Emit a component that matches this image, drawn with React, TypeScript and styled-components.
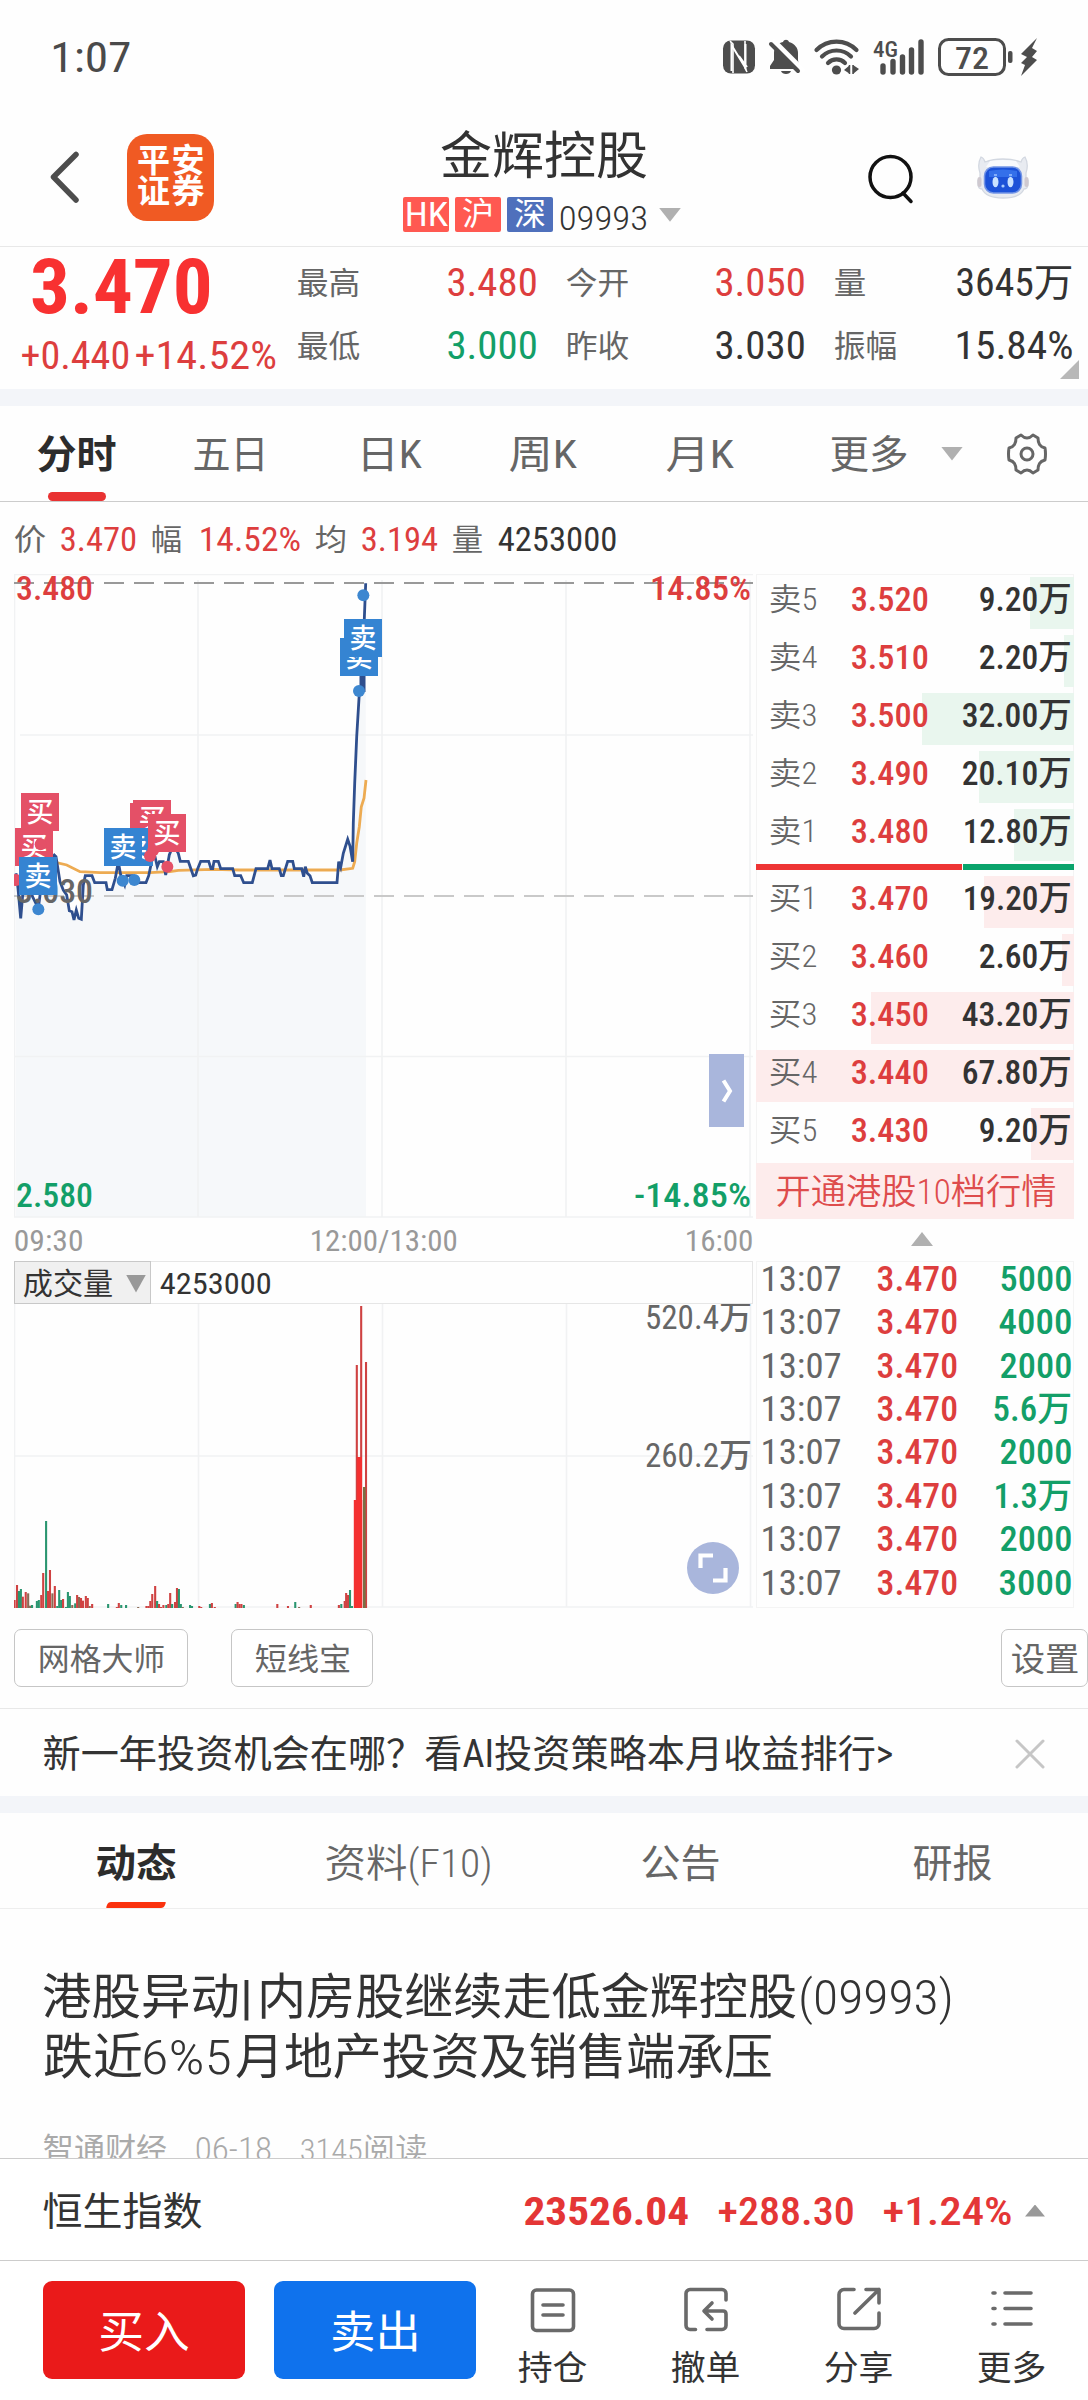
import React, { useLayoutEffect, useRef, useState } from 'react';
import styled, { createGlobalStyle } from 'styled-components';

const RED = '#dd3e3e';
const GREEN = '#139f68';
const INK = '#333';
const GREY = '#666';
const FONT = 'Roboto, "Noto Sans CJK SC", sans-serif';

const Global = createGlobalStyle`
  * { box-sizing: border-box; }
  body { margin: 0; background: #fff; }
`;

const Page = styled.div`
  width: 1088px;
  height: 2400px;
  overflow: hidden;
  display: flex;
  flex-direction: column;
  background: #fefefe;
  color: ${INK};
  font-family: ${FONT};
  font-stretch: 75%;
`;

/* Text condensed or widened to an exact measure */
const FitBox = styled.span<{ $w: number; $ml: number; $size: number; $weight: number; $color?: string }>`
  display: block;
  flex: none;
  width: ${p => p.$w}px;
  margin-left: ${p => p.$ml}px;
  font-size: ${p => p.$size}px;
  font-weight: ${p => p.$weight};
  line-height: 1.2;
  white-space: nowrap;
  color: ${p => p.$color || 'inherit'};
`;
const FitInk = styled.span`
  display: inline-block;
  transform-origin: 0 50%;
`;

type FitProps = { w: number; ml?: number; size: number; weight?: number; color?: string; children: React.ReactNode };
function Fit({ w, ml = 0, size, weight = 385, color, children }: FitProps) {
  const ref = useRef<HTMLSpanElement>(null);
  const [scale, setScale] = useState(1);
  useLayoutEffect(() => {
    if (ref.current) setScale((w + size * 0.08) / ref.current.offsetWidth);
  }, [w, size, children]);
  return (
    <FitBox $w={w} $ml={ml} $size={size} $weight={weight} $color={color}>
      <FitInk ref={ref} style={{ transform: `translateX(${-size * 0.04}px) scaleX(${scale})` }}>{children}</FitInk>
    </FitBox>
  );
}

const Triangle = styled.i<{ $up?: boolean; $w: number; $h: number; $ml?: number; $color?: string }>`
  display: block;
  flex: none;
  width: ${p => p.$w}px;
  height: ${p => p.$h}px;
  margin-left: ${p => p.$ml || 0}px;
  background: ${p => p.$color || '#b0b0b0'};
  clip-path: ${p => (p.$up ? 'polygon(50% 0, 100% 100%, 0 100%)' : 'polygon(0 0, 100% 0, 50% 100%)')};
`;

const StatusBar = styled.div`
  height: 114px;
  flex: none;
  display: flex;
  align-items: center;
  justify-content: space-between;
  padding: 1px 0 0 52px;
  color: #4a4a4a;
`;

const Header = styled.header`
  height: 133px;
  flex: none;
  display: grid;
  grid-template-columns: 403px 279px 1fr;
  border-bottom: 1px solid #e8e8e8;
`;
const HeaderLeft = styled.div`
  display: flex;
  align-items: flex-start;
  padding: 20px 0 0 48px;
`;
const Logo = styled.div`
  width: 87px;
  height: 87px;
  margin-left: 48px;
  border-radius: 20px;
  background: #f05a23;
  color: #fff;
  display: flex;
  flex-direction: column;
  align-items: center;
  justify-content: center;
  font-size: 33px;
  line-height: 31px;
  font-weight: 600;
  letter-spacing: 1.5px;
  padding: 0 0 4px 2px;
`;
const HeaderTitle = styled.div`
  display: flex;
  flex-direction: column;
  padding-top: 12px;
`;
const CodeRow = styled.div`
  display: flex;
  align-items: center;
  gap: 6px;
  margin-top: 10px;
  height: 35px;
`;
const Code = styled.div`
  padding: 7px 0 0 1px;
`;
const Badge = styled.span<{ $bg: string }>`
  width: 46px;
  height: 35px;
  border-radius: 2px;
  background: ${p => p.$bg};
  color: #fff;
  display: flex;
  align-items: center;
  justify-content: center;
  font-size: 32px;
  line-height: 35px;
`;
const HeaderRight = styled.div`
  display: flex;
  align-items: flex-start;
  gap: 59px;
  padding: 39px 0 0 185px;
`;
const RobotSlot = styled.div`
  padding-top: 3px;
`;

const Quote = styled.section`
  height: 142px;
  flex: none;
  display: grid;
  grid-template-columns: 298px 1fr;
  position: relative;
`;
const QuoteMain = styled.div`
  display: flex;
  flex-direction: column;
  margin-top: -5px;
`;
const ChangeRow = styled.div`
  display: flex;
`;
const Stats = styled.div`
  display: grid;
  grid-template-rows: 63px 63px;
  padding-top: 5px;
`;
const StatRow = styled.div`
  display: flex;
  align-items: center;
`;
const Corner = styled.i`
  position: absolute;
  right: 9px;
  bottom: 10px;
  width: 19px;
  height: 19px;
  background: #b8b8b8;
  clip-path: polygon(100% 0, 100% 100%, 0 100%);
`;

const Band = styled.div`
  height: 17px;
  flex: none;
  background: #f3f5f9;
`;

const ChartTabs = styled.nav`
  height: 96px;
  flex: none;
  display: flex;
  align-items: stretch;
  border-bottom: 1px solid #ccc;
  color: ${GREY};
`;
const ChartTab = styled.div<{ $ml: number; $active?: boolean }>`
  margin-left: ${p => p.$ml}px;
  display: flex;
  flex-direction: column;
  align-items: center;
  padding-top: 26px;
  color: ${p => (p.$active ? '#2c2c2c' : GREY)};
`;
const Underline = styled.i`
  width: 58px;
  height: 9px;
  margin-top: auto;
  border-radius: 5px;
  background: #e93232;
`;
const TabIcon = styled.div<{ $ml: number }>`
  display: flex;
  align-items: center;
  margin-left: ${p => p.$ml}px;
`;

const InfoRow = styled.div`
  height: 72px;
  flex: none;
  display: flex;
  align-items: center;
  padding: 4px 0 0 15px;
  color: ${GREY};
`;

const Market = styled.section`
  height: 1034px;
  flex: none;
  display: grid;
  grid-template-columns: 742px 318px;
  padding-left: 14px;
`;
const ChartColumn = styled.div`
  display: flex;
  flex-direction: column;
  svg { display: block; }
`;
const TimeAxis = styled.div`
  height: 43px;
  width: 739px;
  display: flex;
  align-items: center;
  justify-content: space-between;
  color: #999;
  padding: 3px 1px 0 1px;
`;
const VolumeHead = styled.div`
  height: 43px;
  width: 739px;
  display: flex;
  align-items: center;
  border: 1px solid #e6e6e6;
`;
const VolumePick = styled.button`
  width: 137px;
  height: 43px;
  margin: -1px;
  padding: 2px 0 0 9px;
  display: flex;
  align-items: center;
  text-align: left;
  border: 1px solid #c8c8c8;
  background: #f0f0f0;
  color: ${INK};
  font: inherit;
`;
const VolumeValue = styled.div`
  padding: 3px 0 0 11px;
`;

const SideColumn = styled.div`
  display: flex;
  flex-direction: column;
`;
const Book = styled.div`
  border: 1px solid #f4f4f4;
  height: 644px;
  padding-top: 2px;
  display: flex;
  flex-direction: column;
`;
const BookRow = styled.div`
  height: 52px;
  margin: 0 -1px 6px;
  display: grid;
  flex: none;
`;
const DepthBar = styled.i<{ $side: string }>`
  grid-area: 1 / 1;
  justify-self: end;
  background: ${p => (p.$side === '卖' ? '#e9f6ee' : '#fdecec')};
`;
const BookCells = styled.div`
  grid-area: 1 / 1;
  display: grid;
  grid-template-columns: 82px 1fr auto;
  align-items: center;
  padding: 0 4px 7px 14px;
  color: ${INK};
`;
const Ratio = styled.div`
  height: 6px;
  flex: none;
  margin: -3px -1px 6px;
  display: grid;
  grid-template-columns: 206px 111px;
  gap: 1px;
  i:first-child { background: #ee3434; }
  i:last-child { background: #0aa36b; }
`;
const OpenDepth = styled.div`
  flex: none;
  height: 56px;
  margin: -3px -1px 0;
  padding: 4px 0 0 21px;
  display: flex;
  align-items: center;
  background: #fdecec;
`;
const Collapse = styled.div`
  height: 43px;
  padding-top: 14px;
`;
const Ticks = styled.div`
  height: 347px;
  border: 1px solid #f4f4f4;
  display: flex;
  flex-direction: column;
`;
const Tick = styled.div`
  height: 43.43px;
  flex: none;
  display: grid;
  grid-template-columns: 116px 1fr auto;
  align-items: center;
  padding: 0 2px 0 5px;
  &:first-child { margin-top: -4px; }
`;

const Tools = styled.div`
  height: 101px;
  flex: none;
  display: flex;
  align-items: center;
  padding: 0 0 1px 14px;
  border-bottom: 1px solid #e8e8e8;
`;
const ToolButton = styled.button<{ $w: number; $ml?: string }>`
  width: ${p => p.$w}px;
  height: 58px;
  margin-left: ${p => p.$ml || 0};
  padding: 4px 0 0;
  display: flex;
  justify-content: center;
  align-items: center;
  border: 1px solid #c6c6c6;
  border-radius: 7px;
  background: #fff;
  color: ${GREY};
  font: inherit;
`;

const Promo = styled.div`
  height: 87px;
  flex: none;
  display: flex;
  align-items: center;
  justify-content: space-between;
  padding: 4px 43px 0 44px;
  svg { margin-bottom: 2px; }
`;

const NewsTabs = styled.nav`
  height: 96px;
  flex: none;
  display: grid;
  grid-template-columns: repeat(4, 1fr);
  border-bottom: 1px solid #eee;
`;
const NewsTab = styled.div<{ $active?: boolean }>`
  display: flex;
  flex-direction: column;
  align-items: center;
  padding-top: 28px;
  color: ${p => (p.$active ? '#2c2c2c' : GREY)};
`;
const SlantLine = styled.i`
  width: 58px;
  height: 6px;
  margin-top: auto;
  border-radius: 3px 1px;
  transform: skewX(-20deg);
  background: #fa320e;
`;

const Article = styled.article`
  height: 249px;
  flex: none;
  overflow: hidden;
  padding: 59px 0 0 44px;
`;
const Headline = styled.h2`
  margin: 0;
  font-weight: 350;
  height: 60px;
  display: flex;
  align-items: center;
`;
const Meta = styled.div`
  margin-top: 42px;
  height: 40px;
  display: flex;
  align-items: center;
  color: #aaa;
`;

const IndexBar = styled.div`
  height: 102px;
  flex: none;
  display: flex;
  align-items: center;
  padding: 6px 0 0 44px;
  border-top: 1px solid #ccc;
  background: #fff;
  i { margin-bottom: 4px; }
`;
const Actions = styled.footer`
  height: 140px;
  flex: none;
  display: flex;
  border-top: 1px solid #ccc;
  padding: 20px 0 0 43px;
  background: #fff;
`;
const TradeButton = styled.button<{ $bg: string; $ml?: number }>`
  width: 202px;
  height: 98px;
  margin-left: ${p => p.$ml || 0}px;
  padding: 7px 0 0;
  display: flex;
  align-items: center;
  justify-content: center;
  border: 0;
  border-radius: 9px;
  background: ${p => p.$bg};
  color: #fff;
  font: inherit;
`;
const ActionGrid = styled.div`
  display: grid;
  grid-template-columns: repeat(4, 153px);
`;
const Action = styled.div`
  display: flex;
  flex-direction: column;
  align-items: center;
  padding-top: 6px;
  gap: 15px;
`;

const StatusIcons = () => (
  <svg width="388" height="60" viewBox="699 27 388 60" fill="#4d4d4d">
    <rect x="722" y="39.5" width="32" height="33" rx="8" />
    <path d="M730.5 70V44l14 23V43M738 55l8 11" fill="none" stroke="#fff" strokeWidth="2" />
    <path d="M729 40l3 3v29M746 71l-2-4V40" fill="none" stroke="#fff" strokeWidth="1.6" />
    <path d="M769 68v-3l4-6V52c0-6 4-10 9-11 1-3 5-3 6 0 6 2 9 6 9 11v7l1 6 2 3z" />
    <path d="M780 70h10c-1 4-9 4-10 0z" />
    <path d="M772 39l31 31" stroke="#fff" strokeWidth="5" />
    <path d="M770 43l27 27" stroke="#4d4d4d" strokeWidth="4" strokeLinecap="round" />
    <g fill="none" stroke="#4d4d4d" strokeWidth="4.200" strokeLinecap="round">
      <path d="M815.500 49a28 28 0 0 1 40 0M821 55.500a20.500 20.500 0 0 1 29 0M827 62a12 12 0 0 1 17 0" />
      <path d="M882 65v6M892 60.500v10.500M901.500 56v15M910.500 49v22M920 41v30" strokeWidth="5.400" />
    </g>
    <circle cx="835.500" cy="69" r="4.600" />
    <path d="M843 69l6-5v9zM852 64l6 4-6 5z" />
    <path d="M848.500 64v9M852 64v9" stroke="#4d4d4d" strokeWidth="1.500" />
    <text x="872" y="55.500" fontFamily="Roboto" fontSize="22" fontWeight="500" textLength="25" lengthAdjust="spacingAndGlyphs">4G</text>
    <rect x="938.500" y="38.500" width="65" height="35" rx="9" fill="none" stroke="#4d4d4d" strokeWidth="3" />
    <rect x="1007" y="50" width="4.500" height="12" rx="2" />
    <text x="954" y="67.500" fontFamily="Roboto" fontSize="32" fontWeight="500" textLength="34" lengthAdjust="spacingAndGlyphs">72</text>
    <path d="M1036 37l-16 16 6 3-6 6 4 2-4 11 16-16-5-3 5-6-5-3z" />
  </svg>
);

const Robot = () => (
  <svg width="54" height="44" viewBox="0 0 54 44">
    <path d="M5 1q3 1 4 5 8-3 18-3t18 3q1-4 4-5 4 7 1 16v5q3 2 2 6 0 5-4 5-4 9-21 9T6 33q-4 0-4-5-1-4 2-6v-5Q1 8 5 1z" fill="#e8ebf1" stroke="#d3d8e1" strokeWidth="1.300" />
    <path d="M14 5q13-2 26 0l4 6H10z" fill="#f8f9fc" />
    <rect x="1.500" y="21" width="4" height="10" rx="2" fill="#cfc9d0" />
    <rect x="48.500" y="21" width="4" height="10" rx="2" fill="#cfc9d0" />
    <rect x="8.500" y="11" width="37" height="26" rx="9" fill="#1c52d8" stroke="#7395e6" strokeWidth="1.500" />
    <path d="M13 15q14-3 28 0v6H13z" fill="#3470ea" />
    <ellipse cx="19.500" cy="26" rx="3" ry="5.200" fill="#c9e2ff" />
    <ellipse cx="34.500" cy="26" rx="3" ry="5.200" fill="#c9e2ff" />
    <circle cx="27" cy="30" r="1.600" fill="#a9cdff" />
    <path d="M18 19h3M33 19h3" stroke="#9cc1ff" strokeWidth="1.300" />
  </svg>
);

const Gear = () => (
  <svg width="42" height="42" viewBox="-1 0 42 42" fill="none" stroke="#666" strokeWidth="3" strokeLinejoin="round">
    <path d="M14 2q3 3 6 3t6-3l5 3q0 4 1.500 6.500T38 15q1 6 0 12-4 1-5.500 3.500T31 37l-5 3q-3-3-6-3t-6 3l-5-3q0-4-1.500-6.500T2 27q-1-6 0-12 4-1 5.500-3.500T9 5z" />
    <circle cx="20" cy="21" r="6" />
  </svg>
);

const PRICE: [number, number][] = [[48,940],[54,985],[62,1075],[68,1005],[80,985],[95,1005],[115,1045],[122,990],[135,940],[150,900],[163,885],[168,890],[180,965],[190,990],[200,1005],[208,1052],[216,1055],[222,1080],[229,1050],[236,1075],[244,1078],[250,975],[256,947],[276,947],[284,968],[318,968],[322,989],[336,989],[346,955],[355,905],[362,945],[374,975],[380,947],[398,947],[412,968],[438,968],[446,947],[458,890],[465,890],[472,920],[478,905],[490,905],[497,945],[508,885],[520,855],[535,880],[541,904],[565,904],[580,947],[587,945],[593,926],[602,904],[626,904],[633,926],[638,926],[642,904],[655,904],[662,926],[698,926],[704,947],[722,947],[731,968],[757,968],[768,926],[803,926],[810,900],[816,926],[838,926],[844,947],[850,947],[863,904],[878,904],[883,926],[905,926],[911,950],[916,920],[922,940],[930,947],[937,968],[1011,968],[1016,905],[1022,922],[1030,880],[1043,838],[1050,858],[1058,905],[1060,790],[1064,670],[1070,530],[1078,400],[1085,385],[1088,300],[1092,200],[1097,70]];
const AVG: [number, number][] = [[100,905],[170,908],[200,915],[240,935],[300,938],[450,938],[510,935],[535,931],[640,928],[720,930],[1020,930],[1058,925],[1064,905],[1070,850],[1078,800],[1084,740],[1092,715],[1098,660]];
const toPoints = (list: [number, number][]) => list.map(([x, y]) => `${(x / 3).toFixed(1)},${(y / 3 + 560).toFixed(1)}`).join(' ');

const Tag = ({ x, y, sell }: { x: number; y: number; sell?: boolean }) => (
  <g>
    <rect x={x / 3} y={y / 3 + 560} width="38" height="38" fill={sell ? '#3584d2' : '#e45067'} />
    <text x={x / 3 + 19} y={y / 3 + 589} textAnchor="middle" fontSize="27" fontWeight="500" fill="#fff">{sell ? '卖' : '买'}</text>
  </g>
);
const Dot = ({ x, y, sell }: { x: number; y: number; sell?: boolean }) => (
  <circle cx={x / 3} cy={y / 3 + 560} r="6" fill={sell ? '#3d87d0' : '#e45067'} />
);
const Label = ({ x, y, w, color, children, size = 34, weight = 470 }: { x: number; y: number; w: number; color: string; children: string; size?: number; weight?: number }) => (
  <text x={x} y={y} fontSize={size} fontWeight={weight} fill={color} textLength={w} lengthAdjust="spacingAndGlyphs">{children}</text>
);

const PriceChart = () => (
  <svg width="742" height="644" viewBox="14 574 742 644" fontFamily={FONT}>
    <path d={`M16 1217 L${toPoints(PRICE)} 366,1217z`} fill="#f6f8fa" />
    <g stroke="#f1f2f3" strokeWidth="1.600">
      <path d="M14 574.500H753M14.500 575V1217M14 1217H753M20 735H753M14 1056.500H753M198 580V1217M382 580V1217M566 580V1217M750 580V1217" />
    </g>
    <path d="M14 583H753" stroke="#999" strokeWidth="2" strokeDasharray="20 10" />
    <path d="M14 896H753" stroke="#c9c9c9" strokeWidth="2" strokeDasharray="20 10" />
    <Label x={16} y={600} w={77} color={RED}>3.480</Label>
    <Label x={650} y={600} w={101} color={RED}>14.85%</Label>
    <Label x={16} y={1207} w={77} color={GREEN}>2.580</Label>
    <Label x={634} y={1207} w={117} color={GREEN}>-14.85%</Label>
    <polyline points={toPoints(AVG)} fill="none" stroke="#edab52" strokeWidth="2.800" />
    <polyline points={toPoints(PRICE)} fill="none" stroke="#2f4f8e" strokeWidth="2.800" />
    <path d="M362.500 676v16" stroke="#2f4f8e" strokeWidth="6" />
    <Label x={16} y={903} w={77} color={GREY}>3.030</Label>
    <Dot x={48} y={960} />
    <Tag x={63} y={699} />
    <Tag x={45} y={804} />
    <Dot x={122} y={853} />
    <Tag x={57} y={891} sell />
    <Dot x={115} y={1048} sell />
    <Tag x={390} y={729} />
    <Tag x={399} y={720} />
    <Tag x={345} y={804} sell />
    <Tag x={312} y={804} sell />
    <Dot x={450} y={888} />
    <Dot x={460} y={870} />
    <Tag x={444} y={762} />
    <Dot x={368} y={962} sell />
    <Dot x={403} y={960} sell />
    <Dot x={502} y={920} />
    <Tag x={1020} y={234} sell />
    <Tag x={1032} y={177} sell />
    <Dot x={1090} y={106} sell />
    <Dot x={1077} y={393} sell />
    <rect x="709" y="1054" width="35" height="73" fill="#a9b6dc" />
    <path d="M723.500 1080.500l6.500 10.500-6.500 10.500" fill="none" stroke="#fff" strokeWidth="4" />
  </svg>
);

const R = '#cf4242', G = '#2a9670', M = '#8b6a55';
const VOLUME: [number, number, string][] = [[30,1260,R],[35,1215,R],[39,1233,G],[43,1227,G],[47,1250,R],[53,1236,R],[58,1240,M],[62,1277,M],[66,1275,G],[76,1263,G],[80,1260,G],[85,1245,R],[89,1179,R],[95,1023,G],[99,1233,R],[103,1170,R],[108,1240,M],[113,1218,R],[118,1278,G],[122,1230,G],[126,1260,G],[130,1257,R],[136,1281,G],[140,1236,G],[144,1248,G],[149,1275,M],[155,1270,G],[159,1245,R],[163,1251,M],[167,1254,R],[171,1262,R],[177,1248,R],[181,1254,R],[185,1278,M],[190,1272,R],[223,1272,G],[241,1281,R],[245,1269,R],[250,1275,G],[260,1275,G],[285,1281,M],[302,1278,R],[306,1278,R],[310,1263,R],[314,1242,R],[320,1218,R],[324,1263,G],[328,1272,R],[332,1281,R],[337,1275,R],[343,1275,G],[347,1272,R],[351,1239,R],[355,1272,G],[361,1266,R],[365,1224,R],[369,1227,G],[373,1272,G],[377,1281,M],[392,1275,G],[396,1278,G],[411,1278,R],[415,1281,R],[433,1272,G],[437,1269,R],[443,1281,R],[486,1272,G],[490,1266,R],[494,1272,R],[498,1272,R],[503,1275,G],[572,1272,R],[594,1278,R],[609,1266,G],[617,1281,M],[641,1275,R],[699,1275,R],[704,1272,G],[711,1263,R],[714,1239,R],[718,1245,R],[722,1230,G],[726,1278,G],[736,555,R],[745,378,R],[755,546,R]];

const VolumeChart = () => (
  <svg width="742" height="304" viewBox="14 1304 742 304" fontFamily={FONT}>
    <g stroke="#f1f2f3" strokeWidth="1.600">
      <path d="M14.500 1304V1607M14 1607H753M14 1456H753M198.500 1304V1607M382.500 1304V1607M566.500 1304V1607M750.500 1304V1607" />
    </g>
    {VOLUME.map(([x, y, c]) => (
      <rect key={x} x={x / 2.063 - 1} y={1180 + y / 3} width="2.100" height={428 - y / 3} fill={c} />
    ))}
    <rect x="353.800" y="1500" width="8.400" height="108" fill="#f43030" />
    <rect x="357" y="1457" width="5" height="151" fill="#f43030" />
    <rect x="363" y="1487" width="2.600" height="121" fill="#7a7045" />
    <Label x={645} y={1329} w={107} color={GREY} size={33} weight={450}>520.4万</Label>
    <Label x={645} y={1466.500} w={107} color={GREY} size={33} weight={450}>260.2万</Label>
    <circle cx="713" cy="1568" r="26" fill="#a9b6dc" />
    <path d="M700.500 1568v-12.500h12.500M725.500 1568v12.500h-12.500" fill="none" stroke="#fff" strokeWidth="4.200" />
  </svg>
);

type Level = { side: string; n: number; price: string; vol: string; w: number; bar: number };
const SELLS: Level[] = [
  { side: '卖', n: 5, price: '3.520', vol: '9.20万', w: 90, bar: 44 },
  { side: '卖', n: 4, price: '3.510', vol: '2.20万', w: 90, bar: 10 },
  { side: '卖', n: 3, price: '3.500', vol: '32.00万', w: 107, bar: 152 },
  { side: '卖', n: 2, price: '3.490', vol: '20.10万', w: 107, bar: 95 },
  { side: '卖', n: 1, price: '3.480', vol: '12.80万', w: 106, bar: 60 },
];
const BUYS: Level[] = [
  { side: '买', n: 1, price: '3.470', vol: '19.20万', w: 106, bar: 90 },
  { side: '买', n: 2, price: '3.460', vol: '2.60万', w: 90, bar: 12 },
  { side: '买', n: 3, price: '3.450', vol: '43.20万', w: 107, bar: 203 },
  { side: '买', n: 4, price: '3.440', vol: '67.80万', w: 107, bar: 318 },
  { side: '买', n: 5, price: '3.430', vol: '9.20万', w: 90, bar: 43 },
];
const LevelRow = ({ l }: { l: Level }) => (
  <BookRow>
    <DepthBar $side={l.side} style={{ width: l.bar }} />
    <BookCells>
      <Fit w={46} size={31} weight={360} color={GREY}>{l.side}{l.n}</Fit>
      <Fit w={75} size={34} weight={490} color={RED}>{l.price}</Fit>
      <Fit w={l.w} size={34} weight={460}>{l.vol}</Fit>
    </BookCells>
  </BookRow>
);

const TICKS: [string, number][] = [['5000', 70], ['4000', 71], ['2000', 70], ['5.6万', 77], ['2000', 70], ['1.3万', 76], ['2000', 70], ['3000', 71]];

const stroke = { fill: 'none', stroke: '#6a6a6a', strokeWidth: 3.6, strokeLinecap: 'round' as const, strokeLinejoin: 'round' as const };
const ACTIONS = [
  { label: '持仓', icon: <g {...stroke}><rect x="2.500" y="3" width="41" height="40.500" rx="4" /><path d="M13 18h20M13 28h20" /></g> },
  { label: '撤单', icon: <g {...stroke}><path d="M12.500 42.500H7a4 4 0 0 1-4-4V6.500a4 4 0 0 1 4-4h32a4 4 0 0 1 4 4V13M24 42.500h15a4 4 0 0 0 4-4V27q0-3-3-3H22M29 16l-8 8 8 8" /></g> },
  { label: '分享', icon: <g {...stroke}><path d="M18 2.500H8a5 5 0 0 0-5 5v29a5 5 0 0 0 5 5h30a5 5 0 0 0 5-5V26M30 2.500h13V16M43 2.500L19 26" /></g> },
  { label: '更多', icon: <g {...stroke}><path d="M4 6h2M4 21.500h2M4 37h2M16 6h26M16 21.500h26M16 37h26" /></g> },
];

export default function App() {
  return (
    <Page>
      <Global />
      <StatusBar>
        <Fit w={78} size={43} weight={450}>1:07</Fit>
        <StatusIcons />
      </StatusBar>

      <Header>
        <HeaderLeft>
          <svg width="31" height="87" viewBox="48 134 31 87" fill="none" stroke="#4d4d4d" strokeWidth="5.500" strokeLinecap="round" strokeLinejoin="round">
            <path d="M76 154.500L53.500 177 76 200" />
          </svg>
          <Logo><span>平安</span><span>证券</span></Logo>
        </HeaderLeft>
        <HeaderTitle>
          <Fit w={204} ml={39} size={51}>金辉控股</Fit>
          <CodeRow>
            <Badge $bg="#ff5951"><Fit w={41} size={34} weight={450}>HK</Fit></Badge>
            <Badge $bg="#ff5951">沪</Badge>
            <Badge $bg="#4f70bc">深</Badge>
            <Code><Fit w={87} size={34} weight={360}>09993</Fit></Code>
            <Triangle $w={22} $h={14} $ml={6} />
          </CodeRow>
        </HeaderTitle>
        <HeaderRight>
          <svg width="50" height="54" viewBox="867 153 50 54" fill="none" stroke="#111" strokeWidth="3.500" strokeLinecap="round">
            <circle cx="890.500" cy="177" r="20.500" />
            <path d="M903 193l8 8.500" />
          </svg>
          <RobotSlot><Robot /></RobotSlot>
        </HeaderRight>
      </Header>

      <Quote>
        <QuoteMain>
          <Fit w={177} ml={33} size={76} weight={700} color="#f83131">3.470</Fit>
          <ChangeRow>
            <Fit w={107} ml={22} size={39} weight={430} color={RED}>+0.440</Fit>
            <Fit w={139} ml={7} size={39} weight={430} color={RED}>+14.52%</Fit>
          </ChangeRow>
        </QuoteMain>
        <Stats>
          <StatRow>
            <Fit w={61} size={31} color={GREY}>最高</Fit>
            <Fit w={88} ml={89} size={39} weight={440} color={RED}>3.480</Fit>
            <Fit w={61} ml={31} size={31} color={GREY}>今开</Fit>
            <Fit w={88} ml={88} size={39} weight={440} color={RED}>3.050</Fit>
            <Fit w={30} ml={31} size={31} color={GREY}>量</Fit>
            <Fit w={115} ml={92} size={39} weight={440}>3645万</Fit>
          </StatRow>
          <StatRow>
            <Fit w={61} size={31} color={GREY}>最低</Fit>
            <Fit w={88} ml={89} size={39} weight={440} color={GREEN}>3.000</Fit>
            <Fit w={61} ml={31} size={31} color={GREY}>昨收</Fit>
            <Fit w={88} ml={88} size={39} weight={440}>3.030</Fit>
            <Fit w={61} ml={31} size={31} color={GREY}>振幅</Fit>
            <Fit w={116} ml={60} size={39} weight={440}>15.84%</Fit>
          </StatRow>
        </Stats>
        <Corner />
      </Quote>
      <Band />

      <ChartTabs>
        <ChartTab $ml={38} $active><Fit w={77} size={39} weight={650}>分时</Fit><Underline /></ChartTab>
        <ChartTab $ml={79}><Fit w={73} size={39}>五日</Fit></ChartTab>
        <ChartTab $ml={91}><Fit w={62} size={39}>日K</Fit></ChartTab>
        <ChartTab $ml={90}><Fit w={65} size={39}>周K</Fit></ChartTab>
        <ChartTab $ml={92}><Fit w={65} size={39}>月K</Fit></ChartTab>
        <ChartTab $ml={99}><Fit w={76} size={39}>更多</Fit></ChartTab>
        <TabIcon $ml={34}><Triangle $w={22} $h={14} /></TabIcon>
        <TabIcon $ml={43}><Gear /></TabIcon>
      </ChartTabs>

      <InfoRow>
        <Fit w={30} size={30}>价</Fit>
        <Fit w={75} ml={16} size={33} weight={450} color={RED}>3.470</Fit>
        <Fit w={29} ml={16} size={30}>幅</Fit>
        <Fit w={100} ml={19} size={33} weight={450} color={RED}>14.52%</Fit>
        <Fit w={30} ml={16} size={30}>均</Fit>
        <Fit w={75} ml={16} size={33} weight={450} color={RED}>3.194</Fit>
        <Fit w={29} ml={16} size={30}>量</Fit>
        <Fit w={117} ml={17} size={33} weight={430} color={INK}>4253000</Fit>
      </InfoRow>

      <Market>
        <ChartColumn>
          <PriceChart />
          <TimeAxis>
            <Fit w={67} size={30} weight={450}>09:30</Fit>
            <Fit w={146} size={30} weight={450}>12:00/13:00</Fit>
            <Fit w={66} size={30} weight={450}>16:00</Fit>
          </TimeAxis>
          <VolumeHead>
            <VolumePick>
              <Fit w={88} size={30}>成交量</Fit>
              <Triangle $w={20} $h={18} $ml={14} $color="#999" />
            </VolumePick>
            <VolumeValue><Fit w={110} size={30}>4253000</Fit></VolumeValue>
          </VolumeHead>
          <VolumeChart />
        </ChartColumn>
        <SideColumn>
          <Book>
            {SELLS.map(l => <LevelRow key={l.n} l={l} />)}
            <Ratio><i /><i /></Ratio>
            {BUYS.map(l => <LevelRow key={l.n} l={l} />)}
            <OpenDepth><Fit w={278} size={35} weight={360} color="#de4c4c">开通港股10档行情</Fit></OpenDepth>
          </Book>
          <Collapse><Triangle $up $w={22} $h={14} $ml={155} /></Collapse>
          <Ticks>
            {TICKS.map(([vol, w], i) => (
              <Tick key={i}>
                <Fit w={78} size={35} weight={430} color={GREY}>13:07</Fit>
                <Fit w={79} size={35} weight={460} color={RED}>3.470</Fit>
                <Fit w={w} size={35} weight={460} color={GREEN}>{vol}</Fit>
              </Tick>
            ))}
          </Ticks>
        </SideColumn>
      </Market>

      <Tools>
        <ToolButton $w={174}><Fit w={125} size={31}>网格大师</Fit></ToolButton>
        <ToolButton $w={142} $ml="43px"><Fit w={94} size={31}>短线宝</Fit></ToolButton>
        <ToolButton $w={87} $ml="auto"><Fit w={66} size={33}>设置</Fit></ToolButton>
      </Tools>

      <Promo>
        <Fit w={848} size={38}>新一年投资机会在哪？看AI投资策略本月收益排行&gt;</Fit>
        <svg width="30" height="30" viewBox="0 0 30 30" stroke="#c6c6c6" strokeWidth="3" strokeLinecap="round"><path d="M2 2l26 26M28 2L2 28" /></svg>
      </Promo>
      <Band />

      <NewsTabs>
        <NewsTab $active><Fit w={78} size={39} weight={650}>动态</Fit><SlantLine /></NewsTab>
        <NewsTab><Fit w={165} size={39} weight={360}>资料(F10)</Fit></NewsTab>
        <NewsTab><Fit w={77} size={39} weight={370}>公告</Fit></NewsTab>
        <NewsTab><Fit w={77} size={39} weight={370}>研报</Fit></NewsTab>
      </NewsTabs>

      <Article>
        <Headline>
          <Fit w={194} size={49}>港股异动</Fit>
          <Fit w={9} ml={4} size={49}>|</Fit>
          <Fit w={536} ml={8} size={49}>内房股继续走低金辉控股</Fit>
          <Fit w={152} ml={5} size={49} weight={340}>(09993)</Fit>
        </Headline>
        <Headline>
          <Fit w={96} ml={1} size={49}>跌近</Fit>
          <Fit w={87} ml={2} size={49} weight={340}>6%5</Fit>
          <Fit w={534} ml={7} size={49}>月地产投资及销售端承压</Fit>
        </Headline>
        <Meta>
          <Fit w={122} size={31}>智通财经</Fit>
          <Fit w={75} ml={30} size={33} weight={330}>06-18</Fit>
          <Fit w={125} ml={30} size={32} weight={330}>3145阅读</Fit>
        </Meta>
      </Article>

      <IndexBar>
        <Fit w={157} size={39}>恒生指数</Fit>
        <Fit w={162} ml={324} size={38} weight={680} color="#e43636">23526.04</Fit>
        <Fit w={134} ml={32} size={39} weight={520} color="#e43636">+288.30</Fit>
        <Fit w={127} ml={31} size={39} weight={520} color="#e43636">+1.24%</Fit>
        <Triangle $up $w={20} $h={12} $ml={14} $color="#999" />
      </IndexBar>

      <Actions>
        <TradeButton $bg="#ea1a1a"><Fit w={88} size={44}>买入</Fit></TradeButton>
        <TradeButton $bg="#0f72ed" $ml={29}><Fit w={87} size={44}>卖出</Fit></TradeButton>
        <ActionGrid>
          {ACTIONS.map(a => (
            <Action key={a.label}>
              <svg width="46" height="46" viewBox="0 0 46 46">{a.icon}</svg>
              <Fit w={67} size={34}>{a.label}</Fit>
            </Action>
          ))}
        </ActionGrid>
      </Actions>
    </Page>
  );
}
